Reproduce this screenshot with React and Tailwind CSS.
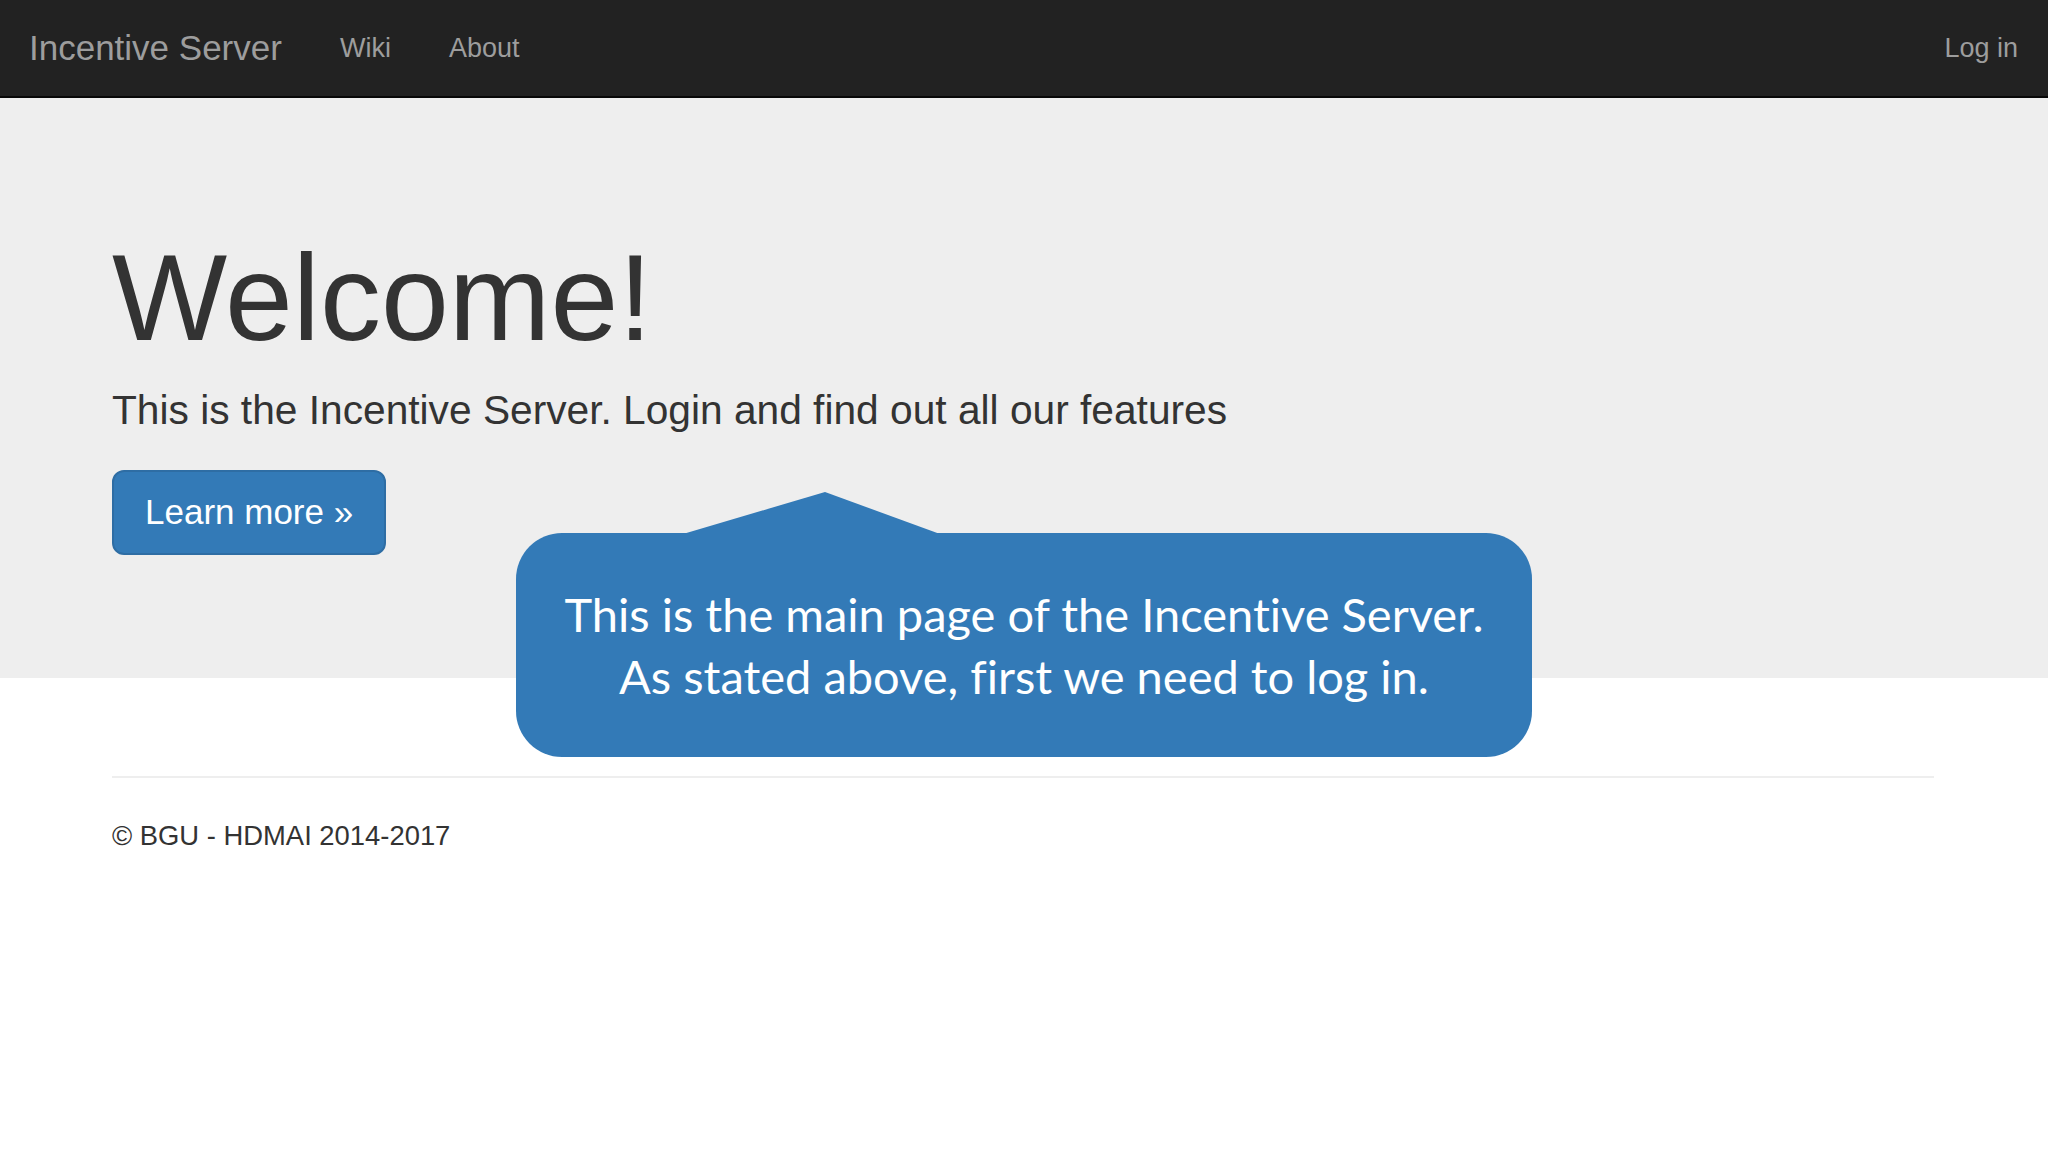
import React from 'react';

const sans = { fontFamily: '"Liberation Sans", Arial, sans-serif' };

function Navbar() {
    return (
        <nav className="flex h-[98px] items-center border-b-2 border-[#080808] bg-[#222222] text-[#9d9d9d]">
            <a className="px-[29px] text-[35px] leading-[48px]">Incentive Server</a>
            <a className="px-[29px] text-[27px] leading-[40px]">Wiki</a>
            <a className="px-[29px] text-[27px] leading-[40px]">About</a>
            <a className="ml-auto pl-[29px] pr-[30px] text-[27px] leading-[40px]">Log in</a>
        </nav>
    );
}

function Callout() {
    return (
        <div className="absolute left-[516px] top-[533px] h-[224px] w-[1016px]">
            <svg
                className="absolute left-[167px] top-[-41px]"
                width="257"
                height="42"
                viewBox="0 0 257 42"
            >
                <polygon points="0,42 142,0 257,42" fill="#337ab7" />
            </svg>
            <div
                className="flex h-full w-full flex-col items-center justify-center rounded-[46px] bg-[#337ab7] text-center text-[47px] leading-[62px] text-white"
                style={{ fontFamily: 'Lato, "Open Sans", sans-serif', fontVariantLigatures: 'none' }}
            >
                <p>This is the main page of the Incentive Server.</p>
                <p>As stated above, first we need to log in.</p>
            </div>
        </div>
    );
}

export default function App() {
    return (
        <div className="relative min-h-[1152px] bg-white text-[#333333]" style={sans}>
            <Navbar />

            <div className="bg-[#eeeeee] pb-[123px] pl-[112px] pt-[134px]">
                <h1 className="text-[122px] leading-[132px]">Welcome!</h1>
                <p className="mt-[16px] text-[40.7px] leading-[60px]">
                    This is the Incentive Server. Login and find out all our features
                </p>
                <button className="mt-[30px] flex h-[85px] items-center rounded-[12px] border-2 border-[#2e6da4] bg-[#337ab7] px-[31px] text-[35px] text-white">
                    Learn more »
                </button>
            </div>

            <footer className="mx-[112px] mt-[98px] w-[1822px] border-t-2 border-[#eeeeee] pt-[38px]">
                <p className="text-[27.4px] leading-[40px]">© BGU - HDMAI 2014-2017</p>
            </footer>

            <Callout />
        </div>
    );
}
